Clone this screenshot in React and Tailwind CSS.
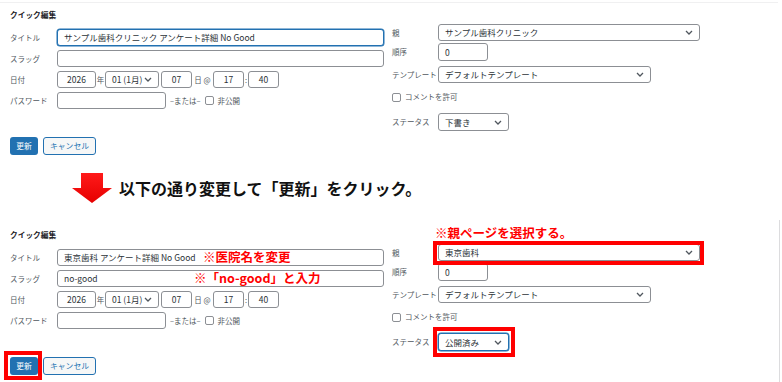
import React from 'react';

const jp = { fontFamily: '"Noto Sans CJK JP", "Noto Sans", sans-serif' };

// 下向きの小さなシェブロン（セレクトボックス用）
function Chevron() {
  return (
    <svg width="8" height="5" viewBox="0 0 8 5" className="shrink-0">
      <path d="M1 1 L4 4 L7 1" fill="none" stroke="#50575e" strokeWidth="1.3" />
    </svg>
  );
}

function Box({ w, value, focus, center, children }) {
  return (
    <div
      className={`h-full flex items-center rounded-[3px] bg-white text-[8.5px] text-[#2c3338] ${
        focus ? 'border border-[#2271b1] shadow-[0_0_0_0.5px_#2271b1]' : 'border border-[#8c8f94]'
      } ${center ? 'justify-center' : 'px-[6px]'}`}
      style={{ width: w }}
    >
      {value}
      {children}
    </div>
  );
}

function Select({ w, value, focus }) {
  return (
    <div
      className={`h-full flex items-center justify-between rounded-[3px] bg-white pl-[6px] pr-[6px] text-[8.5px] text-[#2c3338] ${
        focus ? 'border border-[#2271b1] shadow-[0_0_0_0.5px_#2271b1]' : 'border border-[#8c8f94]'
      }`}
      style={{ width: w }}
    >
      <span className="whitespace-nowrap">{value}</span>
      <Chevron />
    </div>
  );
}

function Check() {
  return <div className="w-[9px] h-[9px] rounded-[2px] border border-[#8c8f94] bg-white shrink-0" />;
}

function Label({ children, w = 47 }) {
  return (
    <div className="text-[7.5px] text-[#50575e] whitespace-nowrap shrink-0" style={{ width: w }}>
      {children}
    </div>
  );
}

function RedBox({ className }) {
  return <div className={`absolute border-4 border-[#ff0000] pointer-events-none ${className}`} />;
}

function Note({ children, className }) {
  return (
    <div className={`absolute whitespace-nowrap text-[12.5px] font-bold text-[#ff0000] leading-none ${className}`}>
      {children}
    </div>
  );
}

function QuickEdit({ title, slug, parent, status, marked }) {
  return (
    <div className="pl-[10px] relative">
      <div className="text-[7.7px] font-bold text-[#1d2327] h-[10px] leading-[10px]">クイック編集</div>

      <div className="flex items-start gap-[8px] mt-[4px]">
        {/* 左カラム */}
        <div className="w-[374px] flex flex-col gap-[4px] mt-[5px]">
          <div className="flex items-center h-[17px]">
            <Label>タイトル</Label>
            <div className="relative flex-1 h-full">
              <Box w="100%" value={title} focus={!marked} />
              {marked && <Note className="left-[146px] top-[2px]">※医院名を変更</Note>}
            </div>
          </div>
          <div className="flex items-center h-[17px]">
            <Label>スラッグ</Label>
            <div className="relative flex-1 h-full">
              <Box w="100%" value={slug} />
              {marked && <Note className="left-[137px] top-[2px]">※「no-good」と入力</Note>}
            </div>
          </div>
          <div className="flex items-center h-[17px] text-[7.5px] text-[#50575e]">
            <Label>日付</Label>
            <Box w={39} value="2026" center />
            <span className="w-[9px] text-center">年</span>
            <Select w={54} value="01 (1月)" />
            <div className="w-[2px]" />
            <Box w={31} value="07" center />
            <span className="w-[21px] text-center whitespace-nowrap">日 @</span>
            <Box w={31} value="17" center />
            <span className="w-[4px] text-center">:</span>
            <Box w={31} value="40" center />
          </div>
          <div className="flex items-center h-[17px] text-[7.5px] text-[#50575e]">
            <Label>パスワード</Label>
            <Box w={109} value="" />
            <span className="ml-[4px] whitespace-nowrap">–または–</span>
            <div className="ml-[4px]">
              <Check />
            </div>
            <span className="ml-[4px]">非公開</span>
          </div>
        </div>

        {/* 右カラム */}
        <div className="flex flex-col relative">
          {marked && <Note className="left-[43px] -top-[17px]">※親ページを選択する。</Note>}
          <div className="flex items-center h-[17px]">
            <Label w={46}>親</Label>
            <div className="relative h-full">
              <Select w={262} value={parent} />
              {marked && <RedBox className="-left-[5px] -right-[4px] -top-[3px] -bottom-[4px]" />}
            </div>
          </div>
          <div className="flex items-center h-[18px] mt-[2px]">
            <Label w={46}>順序</Label>
            <Box w={50} value="0" />
          </div>
          <div className="flex items-center h-[17px] mt-[5px]">
            <Label w={46}>テンプレート</Label>
            <Select w={213} value="デフォルトテンプレート" />
          </div>
          <div className="flex items-center h-[12px] mt-[8px] gap-[4px]">
            <Check />
            <span className="text-[7.5px] text-[#50575e]">コメントを許可</span>
          </div>
          <div className="flex items-center h-[18px] mt-[10px]">
            <Label w={46}>ステータス</Label>
            <div className="relative h-full">
              <Select w={71} value={status} focus={marked} />
              {marked && <RedBox className="-left-[5px] -right-[6px] -top-[6px] -bottom-[6px]" />}
            </div>
          </div>
        </div>
      </div>

      <div className="flex items-center gap-[5px] mt-[6px]">
        <div className="relative">
          <div className="w-[28px] h-[18px] rounded-[3px] bg-[#2271b1] text-white text-[7.8px] flex items-center justify-center">
            更新
          </div>
          {marked && <RedBox className="-left-[6px] -right-[4px] -top-[6px] -bottom-[5px]" />}
        </div>
        <div className="w-[53px] h-[18px] rounded-[3px] border border-[#2271b1] bg-[#f6f7f7] text-[#2271b1] text-[7.8px] flex items-center justify-center">
          キャンセル
        </div>
      </div>
    </div>
  );
}

export default function App() {
  return (
    <div className="w-[782px] h-[382px] bg-white overflow-hidden" style={jp}>
      {/* 変更前 */}
      <div className="h-[160px] pt-[2px]">
        <div className="w-[778px] border-t border-[#f0f0f1]" />
        <div className="pt-[7px]">
          <QuickEdit
            title="サンプル歯科クリニック アンケート詳細 No Good"
            slug=""
            parent="サンプル歯科クリニック"
            status="下書き"
          />
        </div>
      </div>

      {/* 矢印と説明 */}
      <div className="h-[60px] pt-[13px] pl-[72px] flex items-start gap-[7px]">
        <svg width="40" height="30" viewBox="0 0 40 30">
          <defs>
            <linearGradient id="arr" x1="0" y1="0" x2="0" y2="1">
              <stop offset="0" stopColor="#ff1a1a" />
              <stop offset="1" stopColor="#e60000" />
            </linearGradient>
          </defs>
          <polygon points="9,0 31,0 31,15 40,15 20,30 0,15 9,15" fill="url(#arr)" />
        </svg>
        <div className="text-[16px] font-bold text-[#111] leading-none mt-[7px] whitespace-nowrap">
          以下の通り変更して「更新」をクリック。
        </div>
      </div>

      {/* 変更後 */}
      <div className="h-[162px] w-[780px] border-r border-[#dcdcde] pt-[10px]">
        <QuickEdit
          title="東京歯科 アンケート詳細 No Good"
          slug="no-good"
          parent="東京歯科"
          status="公開済み"
          marked
        />
      </div>
    </div>
  );
}
